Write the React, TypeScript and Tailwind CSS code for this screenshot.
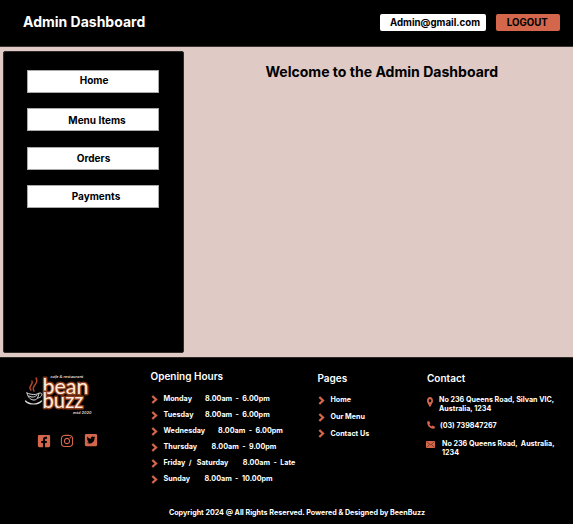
import type { ReactNode } from "react";
import { FaFacebookSquare, FaInstagram, FaTwitterSquare, FaMapMarkerAlt } from "react-icons/fa";

const navItems = [
  { label: "Home", pad: "pl-[3px]", line: "leading-[18px] pb-[2px]" },
  { label: "Menu Items", pad: "pl-[9px]", line: "leading-[20px]" },
  { label: "Orders", pad: "pl-[2px]", line: "leading-[21px]" },
  { label: "Payments", pad: "pl-[7px]", line: "leading-[21px]" },
];

const hours = [
  { day: "Monday", time: "8.00am  -  6.00pm", gap: "gap-[13px]" },
  { day: "Tuesday", time: "8.00am  -  6.00pm", gap: "gap-[11.5px]" },
  { day: "Wednesday", time: "8.00am  -  6.00pm", gap: "gap-[13px]" },
  { day: "Thursday", time: "8.00am  -  9.00pm", gap: "gap-[14.5px]" },
  { day: "Friday  /   Saturday", time: "8.00am  -  Late", gap: "gap-[14.5px]" },
  { day: "Sunday", time: "8.00am  -  10.00pm", gap: "gap-[14.5px]" },
];

const pages = ["Home", "Our Menu", "Contact Us"];

function Chevron() {
  return (
    <svg className="h-[9px] w-[7px] shrink-0" viewBox="0 0 7 9">
      <path d="M1.3 1 5 4.5 1.3 8" fill="none" stroke="#d4674b" strokeWidth="2.3" />
    </svg>
  );
}

function FooterTitle({ children }: { children: ReactNode }) {
  return <h2 className="text-[10px] leading-3 font-semibold">{children}</h2>;
}

function Logo() {
  return (
    <svg className="block h-[44px] w-[68px] overflow-visible" viewBox="0 0 68 44" fontFamily="Lato, sans-serif">
      <text x="24.5" y="5" fontSize="4" fontStyle="italic" fill="#ddd" textLength="33" lengthAdjust="spacingAndGlyphs">cafe &amp; restaurant</text>
      <g fontSize="22" fontWeight="400" fill="#ffeadb" stroke="#8a3c1c" strokeWidth="2.8" strokeLinejoin="round" style={{ paintOrder: "stroke" }}>
        <text x="16.5" y="20.5" textLength="46" lengthAdjust="spacingAndGlyphs">bean</text>
        <text x="16.5" y="35" textLength="41" lengthAdjust="spacingAndGlyphs">buzz</text>
      </g>
      <g fill="none" strokeLinecap="round">
        <path d="M5 17C1 13 8 12 6 8M8 18c-4-5 6-7 2-13" stroke="#b8492d" strokeWidth="1.4" />
        <path d="M1 20c4 2 10 2 12 0-1 5-2 7-5 7s-6-2-7-7Z" fill="#080808" stroke="#ddd" strokeWidth="1" />
        <path d="M3 23c3 2 6 1 8-1M13.5 20c4-1 3 5-2 5" stroke="#ddd" strokeWidth="1" />
        <path d="M-.5 28c4 4 12 4 16 0" stroke="#ddd" strokeWidth="1.2" />
      </g>
      <text x="47" y="40.5" fontSize="4" fontStyle="italic" fill="#ddd" textLength="18.5" lengthAdjust="spacingAndGlyphs">estd 2020</text>
    </svg>
  );
}

export default function App() {
  return (
    <div className="flex h-[524px] w-[573px] flex-col overflow-hidden bg-black font-['Inter',sans-serif]">
      <header className="flex h-[47px] shrink-0 items-start border-b border-[#3b3534] bg-black pr-[13.5px] pl-[23px]">
        <h1 className="pt-[13px] text-[14px] leading-[18px] font-bold whitespace-nowrap text-white">Admin Dashboard</h1>
        <div className="mt-[14px] ml-auto flex gap-[10px] text-[9.7px] leading-[17px] font-bold">
          <div className="h-[17px] w-[106px] rounded-[2px] bg-white pl-[4px] text-center">Admin@gmail.com</div>
          <button className="h-[17px] w-[63.5px] rounded-[2px] bg-[#d4674b] pr-[1px] text-center">LOGOUT</button>
        </div>
      </header>

      <main className="flex h-[310px] shrink-0 bg-[#dfcac5]">
        <aside className="mt-[4px] ml-[2.5px] h-[302px] w-[181px] shrink-0 rounded-[2px] border border-[#302a29] bg-black px-[23px] pt-[17.5px]">
          <nav className="flex flex-col gap-[15.5px]">
            {navItems.map((item) => (
              <button key={item.label} className={`h-[23px] w-[132px] border border-[#aaa] bg-white text-center text-[10px] font-bold ${item.line} ${item.pad}`}>
                {item.label}
              </button>
            ))}
          </nav>
        </aside>
        <h2 className="grow pt-[16px] pl-[7px] text-center text-[14.05px] leading-[18px] font-bold whitespace-nowrap">
          Welcome to the Admin Dashboard
        </h2>
      </main>

      <footer className="flex grow flex-col border-t border-[#302a29] bg-black text-[7.15px] font-bold whitespace-pre text-white">
        <div className="flex h-[143px]">
          <div className="w-[150.5px] shrink-0 pt-[15px] pl-[26px]">
            <Logo />
            <div className="mt-[16.5px] flex gap-[9.5px] pl-[10.5px] text-[#d4674b]">
              <FaFacebookSquare className="size-[14px]" />
              <FaInstagram className="size-[14px]" />
              <FaTwitterSquare className="-mt-px size-[14px]" />
            </div>
          </div>

          <section className="w-[167px] shrink-0 pt-[12px]">
            <FooterTitle>Opening Hours</FooterTitle>
            <ul className="mt-[9px] text-[7.2px]">
              {hours.map((row) => (
                <li key={row.day} className="flex h-[16.1px] items-center">
                  <Chevron />
                  <div className={`ml-[6px] flex ${row.gap}`}>
                    <span>{row.day}</span>
                    <span>{row.time}</span>
                  </div>
                </li>
              ))}
            </ul>
          </section>

          <section className="w-[109.5px] shrink-0 pt-[13.5px]">
            <FooterTitle>Pages</FooterTitle>
            <ul className="mt-[8.5px]">
              {pages.map((page) => (
                <li key={page} className="flex h-[16.8px] items-center gap-[6px]">
                  <Chevron />
                  <span>{page}</span>
                </li>
              ))}
            </ul>
          </section>

          <section className="pt-[13.5px] leading-[9px]">
            <FooterTitle>Contact</FooterTitle>
            <div className="mt-[11px] flex gap-[6px]">
              <FaMapMarkerAlt className="mt-[2px] h-[10px] w-[6px] text-[#d4674b]" preserveAspectRatio="none" />
              <p>{"No 236 Queens Road, Silvan VIC,\nAustralia, 1234"}</p>
            </div>
            <div className="mt-[8px] flex gap-[5px]">
              <svg className="size-[8px] text-[#d4674b]" viewBox="0 0 8 8">
                <path d="M.3.5 2.2 0l1.1 2.5-1 .8c.5 1 1.3 1.8 2.3 2.3l.9-1L8 5.7l-.5 1.9C3.5 8.5-.5 4.5.3.5Z" fill="currentColor" />
              </svg>
              <p>(03) 739847267</p>
            </div>
            <div className="mt-[9px] flex gap-[7px]">
              <svg className="mt-[2px] -ml-px h-[7px] w-[9px]" viewBox="0 0 9 7">
                <path d="M0 0h9v7H0z" fill="#d4674b" />
                <path d="m.5.5 4 3.5 4-3.5M.5 6.5l3-3m5 3-3-3" fill="none" stroke="#4b211a" strokeWidth=".6" />
              </svg>
              <p>{"No 236 Queens Road,  Australia,\n1234"}</p>
            </div>
          </section>
        </div>
        <p className="pt-[7px] pl-[21px] text-center leading-[10px]">Copyright 2024 @ All Rights Reserved. Powered &amp; Designed by BeenBuzz</p>
      </footer>
    </div>
  );
}
